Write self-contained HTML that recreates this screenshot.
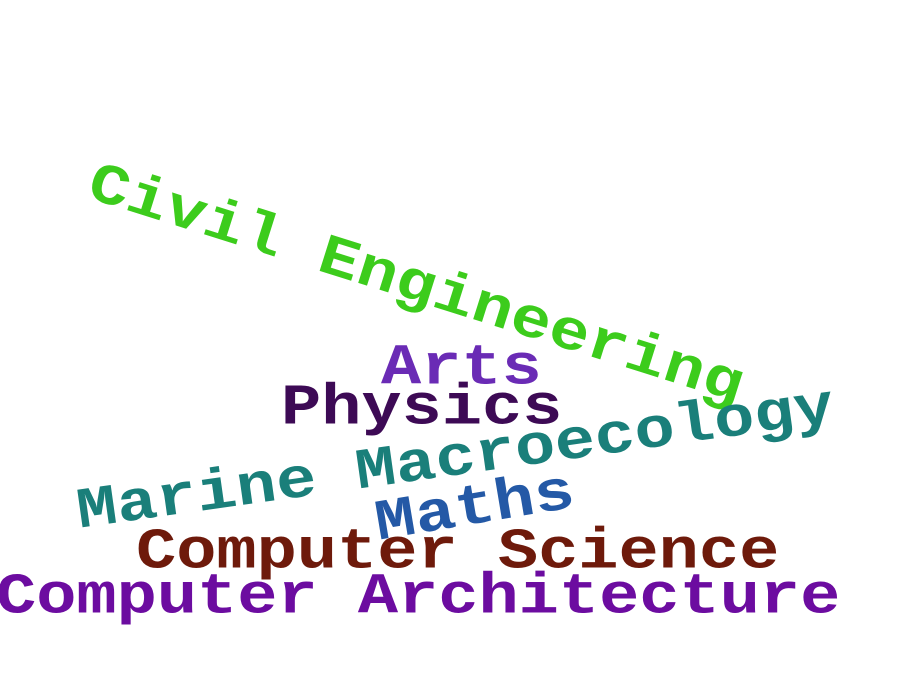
<!DOCTYPE html>
<html><head><style>
html,body{margin:0;padding:0;background:#fff;width:923px;height:691px;overflow:hidden;position:relative}
.w{position:absolute;font-family:"Liberation Mono","Courier New",monospace;font-weight:bold;font-size:67px;line-height:66px;white-space:nowrap;transform-origin:0 55px}
</style></head><body>
<div class="w" style="left:84px;top:146px;color:#3ccc1c;transform:rotate(17.5deg) scale(1.0,0.86)">Civil Engineering</div>
<div class="w" style="left:381px;top:333px;color:#6a2bb5;transform:scale(1.0,0.86)">Arts</div>
<div class="w" style="left:281px;top:373px;color:#3d0a55;transform:scale(1.0,0.86)">Physics</div>
<div class="w" style="left:80px;top:477px;color:#1a7f7a;transform:rotate(-8deg) scale(1.0,0.86)">Marine Macroecology</div>
<div class="w" style="left:379px;top:489px;color:#2459a6;transform:rotate(-9.5deg) scale(1.0,0.86)">Maths</div>
<div class="w" style="left:136px;top:517px;color:#6e1a0b;transform:scale(1.0,0.86)">Computer Science</div>
<div class="w" style="left:-4px;top:562px;color:#6c0ca0;transform:scale(1.0,0.86)">Computer Architecture</div>
</body></html>
